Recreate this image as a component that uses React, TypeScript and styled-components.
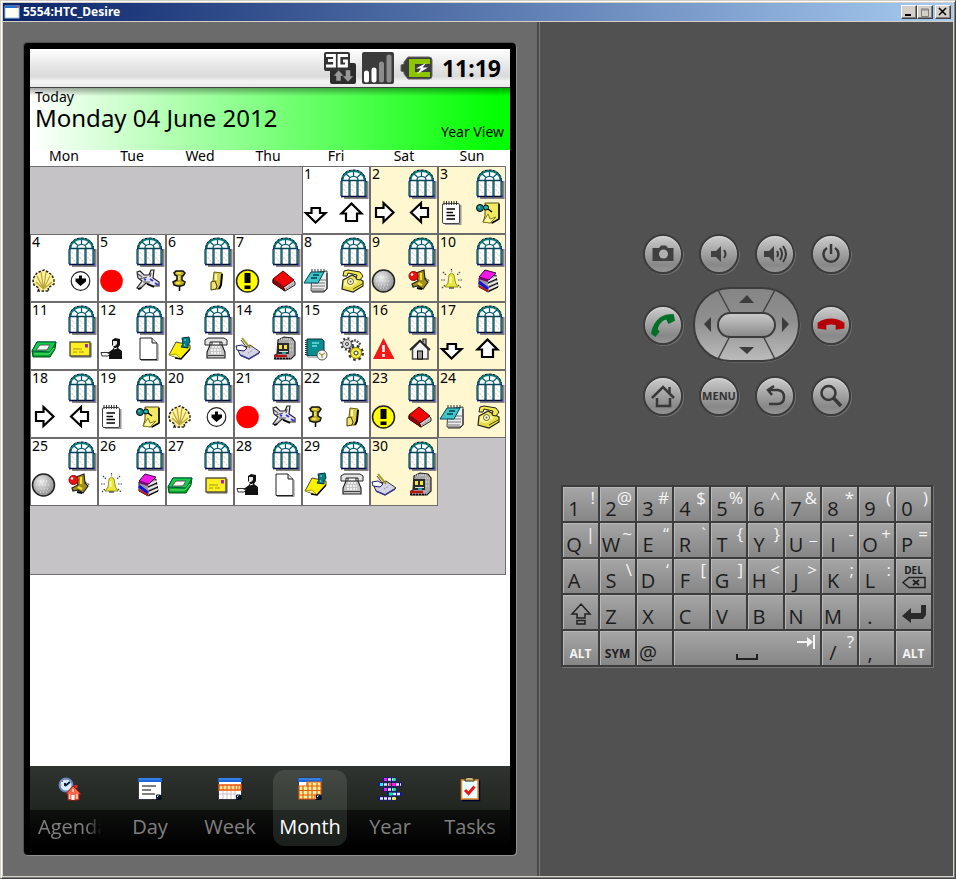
import React from "react";
import styled, { createGlobalStyle, css } from "styled-components";

const GlobalStyle = createGlobalStyle`
  *, *::before, *::after { box-sizing: border-box; }
  body { margin: 0; background: #d4d0c8; font-family: "Open Sans", "Noto Sans", sans-serif; color: #000; }
  button { font: inherit; color: inherit; padding: 0; border: 0; background: none; }
`;

/* ---------- emulator window ---------- */

const EmulatorWindow = styled.div`
  display: flex;
  flex-direction: column;
  min-height: 100vh;
  padding: 1px;
  background: #d4d0c8;
  border: 1px solid;
  border-color: #d4d0c8 #404040 #404040 #d4d0c8;
  box-shadow: inset 1px 1px 0 #fff, inset -1px -1px 0 #808080;
`;

const TitleBar = styled.header`
  display: flex;
  align-items: center;
  height: 18px;
  margin: 1px;
  padding: 0 2px 0 1px;
  gap: 2px;
  background: linear-gradient(90deg, #0a246a, #a6caf0);
`;

const Title = styled.h1`
  flex: 1;
  margin: 0;
  padding-left: 1px;
  font: bold 12px/18px "Noto Sans", sans-serif;
  color: #fff;
`;

const Caption = styled.button<{ $spaced?: boolean }>`
  display: grid;
  place-items: center;
  width: 16px;
  height: 14px;
  margin-left: ${(p) => (p.$spaced ? "0" : "-2px")};
  background: #d4d0c8;
  border: 1px solid;
  border-color: #fff #404040 #404040 #fff;
  box-shadow: inset -1px -1px 0 #808080;
`;

const Body = styled.div`
  display: grid;
  grid-template-columns: minmax(0, 534fr) 3px minmax(0, 413fr);
  flex: 1;
  margin: 0 1px 1px;
`;

const ScreenPane = styled.section`
  display: flex;
  padding: 21px;
  background: #6b6b6b;
`;

const Divider = styled.div`
  background: #4a4a4a;
  border-right: 1px solid #777;
`;

const ControlPane = styled.section`
  display: flex;
  flex-direction: column;
  align-items: center;
  gap: 54px;
  padding: 196px 20px 20px 21px;
  background: #515151;
`;

/* ---------- phone ---------- */

const Phone = styled.div`
  display: flex;
  flex: 1;
  min-width: 0;
  padding: 6px 6px 5px;
  background: #000;
  border-radius: 4px;
  box-shadow: 1px 1px 0 #909090, -1px -1px 0 #505050;
`;

const Screen = styled.div`
  display: flex;
  flex: 1;
  flex-direction: column;
  min-width: 0;
  background: #fff;
`;

const StatusBar = styled.div`
  display: flex;
  align-items: center;
  justify-content: flex-end;
  gap: 6px;
  height: 39px;
  padding-right: 9px;
  border-bottom: 1px solid #444;
  background: linear-gradient(#fff, #e6e6e6 45%, #dadada 72%, #f4f4f4 86%, #e8e8e8);
`;

const Clock = styled.time`
  margin-left: 4px;
  font: bold 23px/38px "Noto Sans", sans-serif;
`;

const DayHeader = styled.div`
  display: grid;
  grid-template-columns: 1fr auto;
  align-content: start;
  height: 62px;
  padding: 0 6px 0 5px;
  background: linear-gradient(rgba(0, 0, 0, 0.35), rgba(0, 0, 0, 0) 8px), linear-gradient(90deg, #fff, #0f0 98%);
`;

const Today = styled.div`
  grid-column: 1 / -1;
  font: 14px/18px "Noto Sans", sans-serif;
`;

const DateText = styled.h2`
  margin: 0;
  font: 24px/24px "Noto Sans", sans-serif;
  white-space: nowrap;
`;

const ViewName = styled.div`
  align-self: end;
  height: 7px;
  font: 14px/18px "Noto Sans", sans-serif;
`;

/* ---------- calendar ---------- */

const Calendar = styled.table`
  width: calc(100% - 4px);
  table-layout: fixed;
  border-collapse: separate;
  border-spacing: 0;
`;

const Weekday = styled.th`
  height: 16px;
  padding: 0 0 4px;
  font: 14px/12px "Noto Sans", sans-serif;
`;

const DayCell = styled.td<{ $weekend: boolean }>`
  height: 68px;
  padding: 0 0 0 1px;
  vertical-align: top;
  border: 1px solid #6c6c6c;
  background: ${(p) => (p.$weekend ? "#fff7cf" : "#fff")};
`;

const Blank = styled.td<{ $edge: "top" | "none" | "bottom" }>`
  height: 68px;
  padding: 0;
  background: #c6c3c6;
  border-right: 1px solid #707070;
  ${(p) => p.$edge === "top" && css`border-top: 1px solid #707070; border-right: 0;`}
  ${(p) => p.$edge === "bottom" && css`height: 69px; border-bottom: 1px solid #707070;`}
`;

const DayGrid = styled.div`
  display: grid;
  grid-template-columns: 24px 28px;
  grid-template-rows: 32px 24px;
  column-gap: 12px;
  padding-top: 2px;
`;

const DayNumber = styled.span`
  font: 14px/10px "Noto Sans", sans-serif;
`;

const Glyph = styled.svg`
  display: block;
  overflow: visible;
`;

const BlankArea = styled.div`
  flex: 1;
`;

/* ---------- tabs ---------- */

const TabBar = styled.nav`
  display: grid;
  grid-template-columns: repeat(6, minmax(0, 1fr));
  height: 84px;
  padding: 4px 0;
  background: linear-gradient(#303430, #202520 44px, #0e100e 44px, #000 80px);
`;

const Tab = styled.button<{ $active?: boolean }>`
  display: grid;
  grid-template-rows: 38px 38px;
  place-items: center;
  margin: 0 3px;
  border-radius: 12px;
  background: ${(p) => (p.$active ? "linear-gradient(#444944, #363c36 40px, #242824 40px, #1c201c)" : "none")};
  color: ${(p) => (p.$active ? "#fff" : "#808080")};
`;

const TabLabel = styled.span<{ $fade?: boolean }>`
  width: 100%;
  max-width: 64px;
  overflow: hidden;
  white-space: nowrap;
  text-align: ${(p) => (p.$fade ? "left" : "center")};
  font: 20px/30px "Open Sans", sans-serif;
  ${(p) => p.$fade && css`mask-image: linear-gradient(90deg, #000 75%, transparent);`}
`;

/* ---------- hardware buttons ---------- */

const ButtonPad = styled.div`
  display: grid;
  grid-template-columns: repeat(4, 56px);
  grid-template-rows: repeat(3, 71px);
  place-items: center;
`;

const RoundButton = styled.button`
  display: grid;
  place-items: center;
  width: 40px;
  height: 40px;
  border: 2px solid #3c3c3c;
  border-radius: 50%;
  background: linear-gradient(#cdcdcd, #a4a4a4 45%, #888 80%, #969696);
  box-shadow: 1px 1px 0 #707070, inset 0 1px 1px #ddd;
  color: #333;
  font: bold 11px/12px "Open Sans", sans-serif;
`;

const DPad = styled.div`
  grid-column: span 2;
`;

const Keyboard = styled.div`
  display: grid;
  align-self: stretch;
  grid-template-columns: repeat(10, minmax(0, 1fr));
  grid-auto-rows: 34px;
  gap: 2px;
  padding: 2px;
  background: #3c3c3c;
  box-shadow: 1px 1px 0 #777;
`;

const Key = styled.button<{ $wide?: boolean }>`
  display: grid;
  grid-template-columns: minmax(0, 1fr);
  grid-template-rows: minmax(0, 1fr);
  grid-column: span ${(p) => (p.$wide ? 4 : 1)};
  background: linear-gradient(#a6a6a6, #868686);
  box-shadow: inset 1px 1px 0 #b8b8b8;
  color: #1c1c1c;
  & > * { grid-area: 1 / 1; }
`;

const KeyMain = styled.span`
  align-self: end;
  display: flex;
  justify-content: center;
  width: 22px;
  font: 20px/24px "Open Sans", sans-serif;
`;

const KeyAlt = styled.span`
  place-self: start end;
  padding-right: 3px;
  color: #f4f4f4;
  font: 17px/22px "Open Sans", sans-serif;
`;

const KeyWord = styled.span<{ $light?: boolean }>`
  place-self: end center;
  padding-bottom: 3px;
  color: ${(p) => (p.$light ? "#f4f4f4" : "#222")};
  font: bold 12px/16px "Open Sans", sans-serif;
`;

const KeyStack = styled.span`
  display: flex;
  flex-direction: column;
  place-self: center;
  align-items: center;
  font: bold 10px/12px "Open Sans", sans-serif;
`;

const KeyDrawing = styled.span<{ $at?: "bottom" | "corner" }>`
  place-self: ${(p) => (p.$at === "bottom" ? "end center" : p.$at === "corner" ? "start end" : "center")};
  padding: ${(p) => (p.$at === "bottom" ? "0 0 5px" : p.$at === "corner" ? "0 4px 0 0" : "3px 0 0")};
`;

/* ---------- calendar drawings (24 x 24) ---------- */

const k = "#000";
const icons: Record<string, React.ReactNode> = {
  down: <path d="M7.500 7H16V12H21.500L11.500 21.500L2 12H7.500Z" fill="#fff" stroke={k} strokeWidth="2.200" />,
  up: <path d="M11.500 2.500L21.500 12.500H17V20H6V12.500H1.500Z" fill="#fff" stroke={k} strokeWidth="2.200" />,
  right: <path d="M4 7H11.500V2L21.500 11.500L11.500 21V16H4Z" fill="#fff" stroke={k} strokeWidth="2.200" />,
  left: <path d="M20 7H13V2L3 11.500L13 21V16H20Z" fill="#fff" stroke={k} strokeWidth="2.200" />,
  notepad: (
    <>
      <path d="M5 23H20.500V4" fill="none" stroke="#999" strokeWidth="2" />
      <rect x="2.500" y="2.500" width="17" height="20" rx="1.500" fill="#fff" stroke="#444" />
      <path d="M4 0V4M6.500 0V4M9 0V4M11.500 0V4M14 0V4M16.500 0V4" stroke="#333" />
      <path d="M6.500 8H15M6.500 11.500H13M6.500 14.500H15M6.500 18H15" stroke={k} strokeWidth="1.500" />
    </>
  ),
  notePin: (
    <>
      <path d="M9 2L23 2V18L16 22L7 21L9 15Z" fill="#f3ea62" stroke="#554f10" />
      <path d="M23 3V18L16 22" fill="none" stroke={k} strokeWidth="1.500" />
      <path d="M7 21L12 13L14 18L20 16L14 22Z" fill="#fffaa0" stroke="#887f20" />
      <circle cx="4" cy="7" r="3.500" fill="#108a8a" stroke={k} />
      <circle cx="10" cy="6.500" r="2.500" fill="#20b0b0" stroke={k} />
      <path d="M12 8L16 11" stroke={k} strokeWidth="1.500" />
      <path d="M2.500 6H4" stroke="#aee" />
    </>
  ),
  shell: (
    <>
      <path d="M6 22L7 19L2 16L1 12L2 8L5 4L9 2L12 1L16 3L20 6L22 11L22 15L16 19L17 22Z" fill="#fff29a" />
      <path d="M11.500 20L4 13M11.500 20L5 7M11.500 20L9 3M11.500 20L14 3M11.500 20L18 7M11.500 20L20 13" stroke="#b8a63c" strokeWidth="1.200" />
      <path d="M6 22L7 19L2 16L1 12L2 8L5 4L9 2L12 1L16 3L20 6L22 11L22 15L16 19L17 22Z" fill="none" stroke="#222" strokeWidth="1.500" strokeDasharray="2.500 1.500" />
    </>
  ),
  circled: (
    <>
      <circle cx="12.500" cy="12" r="9.300" fill="#fff" stroke="#222" strokeWidth="1.200" />
      <path d="M11 6.500H14V9.500H18V12.500L12.500 17L7.500 12.500V9.500H11Z" fill={k} />
    </>
  ),
  red: <circle cx="11.500" cy="12" r="11.300" fill="#f00" />,
  plane: (
    <>
      <path d="M1 3L4 2L8 6L13 6L15 1H18L17 9L23 13V17L17 17L10 14L4 20L1 19L6 12L2 9Z" fill="#e6e6ea" stroke="#222" strokeWidth="1.200" />
      <path d="M3 10L11 8M7 13L14 13M2 5L6 8M15 4L14 8" stroke="#555" strokeWidth="1.200" />
      <path d="M3 19L8 15" stroke="#aaa" strokeWidth="1.500" />
      <path d="M14 10L17 12M19 14L22 16M8 10L10 11" stroke="#3434f2" strokeWidth="2" />
      <path d="M2 20L5 19M11 15L18 18" stroke={k} strokeWidth="1.500" />
    </>
  ),
  pin: (
    <>
      <path d="M11.500 16V22" stroke={k} strokeWidth="1.500" />
      <path d="M8 2H15L17 4L15 7L14 7V11L17 13L16 16L13 17H9L6 16L5 13L9 11V7L7 6L6 4Z" fill="#bfae20" stroke="#111" strokeWidth="1.500" />
      <path d="M8.500 4H13M11 7V11M8 14H12" stroke="#ffee62" strokeWidth="1.500" />
    </>
  ),
  scroll: (
    <>
      <path d="M10 3L18 4L17 16L15 20L11 20L12 15L9 12Z" fill="#d8cc4c" stroke="#6a5f08" />
      <path d="M18 5L17 16L15 20" fill="none" stroke={k} strokeWidth="2" />
      <path d="M7 13L11 12L13 17L12 20L7 21Z" fill="#efe570" stroke="#443c00" />
      <path d="M12 5V11" stroke="#fff9b8" strokeWidth="2" />
    </>
  ),
  alert: (
    <>
      <circle cx="11.500" cy="12" r="11" fill="#ff0" stroke="#222" strokeWidth="1.500" />
      <path d="M8.500 4H14.500V14H8.500ZM8.500 16.500H14.500V20H8.500Z" fill={k} />
    </>
  ),
  book: (
    <>
      <path d="M1 10L12 3L23 13V16L13 22L1 14Z" fill="#ccc" stroke="#222" />
      <path d="M1 10L11 2L22 11L12 18Z" fill="#f00808" stroke="#600" />
      <path d="M1 11L12 19L13 22L1 14Z" fill="#b00000" stroke="#400" />
      <path d="M14 20L22 14" stroke="#666" strokeDasharray="1 1" />
    </>
  ),
  tealPad: (
    <>
      <path d="M8 4L23 2V20L20 22H7Z" fill="#eee" stroke="#444" />
      <path d="M9 14H21M8 17H21M8 20H20M15 11H22" stroke="#777" />
      <path d="M23 4V20L20 23H8" stroke="#222" fill="none" />
      <path d="M7 3L20 3L14 14L0 14Z" fill="#40c4c8" stroke="#045" />
      <path d="M9 6H15M7 9H13" stroke="#045" strokeWidth="1.500" />
      <path d="M8 3V0M11 3V0M14 3V0M17 3V0M20 3V0" stroke="#333" />
    </>
  ),
  yellowPhone: (
    <>
      <path d="M3 11L12 6L23 12V17L13 23L2 20Z" fill="#e6dc48" stroke="#222" strokeWidth="1.200" />
      <path d="M4 2L8 1L20 3L23 7L20 11L16 10L17 6L8 4L7 7L3 7Z" fill="#f6ea4a" stroke="#222" />
      <path d="M4 12L12 8L18 13L11 18L4 17Z" fill="#fff69a" />
      <circle cx="10.500" cy="12.500" r="3" fill="#fff" stroke="#665c00" />
      <circle cx="10.500" cy="12.500" r="1" fill="#665c00" />
      <path d="M13 20L22 15" stroke="#554c00" />
    </>
  ),
  ball: (
    <>
      <circle cx="11.500" cy="12" r="11" fill="url(#ballShade)" stroke="#222" strokeWidth="1.500" />
      <path d="M5 8H16M4 12H19M6 16H18M8 19H15" stroke="#fff" strokeDasharray="1 2" opacity=".7" />
    </>
  ),
  joystick: (
    <>
      <path d="M8 4L16 1L17 10L20 13L15 20L10 17L5 18L4 15L10 12Z" fill="#a09018" stroke="#222" strokeWidth="1.200" />
      <path d="M13 4V11M10 14L14 16" stroke="#f6e23a" strokeWidth="2" />
      <path d="M17 9L22 12" stroke="#222" strokeDasharray="2 1" />
      <path d="M9 19L14 20" stroke={k} strokeWidth="2" />
      <circle cx="5.500" cy="7" r="4.500" fill="#ee1212" stroke="#900" />
      <circle cx="4" cy="5.500" r="1.300" fill="#fff" />
    </>
  ),
  bell: (
    <>
      <path d="M11.500 4L14 6L15.500 14L18 18H5L8 14L9 6Z" fill="#e8e838" stroke="#99941f" />
      <path d="M10.500 8V14" stroke="#fffbb0" strokeWidth="2" />
      <path d="M9 19H14" stroke="#555" strokeWidth="1.500" />
      <path d="M3 3L6 6M20 3L17 6M1 11H5M18 11H22M2 19L5 16M18 16L21 19M11.500 0V3" stroke="#444" strokeWidth="1.200" strokeDasharray="1.500 1" />
    </>
  ),
  books: (
    <>
      <path d="M3 9L20 6L22 18L12 23L3 18Z" fill="#999" stroke="#222" />
      <path d="M3 13L12 20" stroke="#1212d8" strokeWidth="3" />
      <path d="M3 17L12 22" stroke="#c01818" strokeWidth="2" />
      <path d="M12 12L21 8M12 16L22 12M13 20L22 16" stroke="#eee" strokeWidth="1.500" />
      <path d="M12 14L21 10M13 18L22 14M13 22L22 18" stroke={k} />
      <path d="M3 8L9 1L20 4L13 11Z" fill="#f218e8" stroke="#404" />
      <path d="M3 9L12 12" stroke="#80007c" strokeWidth="2" />
    </>
  ),
  tray: (
    <>
      <path d="M0 14L5 5H24L23 12L18 20H1Z" fill="#00a52c" stroke="#044c14" />
      <path d="M0 14L5 5H24L18 15Z" fill="#10d048" stroke="#054" />
      <path d="M4 13L8 8H18L15 13Z" fill="#fff" stroke="#555" />
      <path d="M2 17H17L22 11" stroke="#61ef7c" fill="none" />
    </>
  ),
  mail: (
    <>
      <path d="M3 20H23V6" stroke="#555" fill="none" />
      <rect x="2" y="5" width="20" height="14" fill="#ffef20" stroke="#333" strokeWidth="1.200" />
      <rect x="17" y="7" width="3" height="3.500" fill="#b323a6" />
      <path d="M5 12H14M5 15H9M11 15H16" stroke="#a59410" />
    </>
  ),
  person: (
    <>
      <path d="M12 3L15 1L20 2V8L18 11L22 14V22H9V18H2V16L9 15L13 12L14 10L12 8Z" fill="#111" />
      <path d="M13 4H17L17 7L15 9H13Z" fill="#e6e6e6" />
      <path d="M1 15.500H7L10 17L8 19H2Z" fill="#fff" stroke="#333" />
      <path d="M14 12L17 11" stroke="#fff" />
    </>
  ),
  page: (
    <>
      <path d="M4 22.500V1H16L21 6V22.500Z" fill="#fff" stroke="#222" />
      <path d="M16 1V6H21" fill="#ddd" stroke="#222" />
      <path d="M22 7V23.500H5" fill="none" stroke="#888" />
    </>
  ),
  yellowNote: (
    <>
      <path d="M1 18L8 5L22 8L22 12L13 22L7 20Z" fill="#fff000" stroke="#444" />
      <path d="M22 12L13 22L7 21" fill="none" stroke={k} strokeWidth="1.500" />
      <path d="M1 18L8 17L12 21" fill="#fffa9a" stroke="#a59e00" />
      <path d="M14 1L21 0L22 5L20 8L20 11L13 10L15 7Z" fill="#087f82" stroke="#034" />
      <path d="M16 3H18M16 7L17 9" stroke="#7dd" />
    </>
  ),
  greyPhone: (
    <>
      <path d="M1 3L4 1H20L23 3V8H18V5H6V8H1Z" fill="#e4e4e4" stroke="#222" />
      <path d="M6 8H18L21 15V21H3V15Z" fill="#c4c4c4" stroke="#222" strokeWidth="1.200" />
      <path d="M8 5V8M16 5V8" stroke="#222" />
      <path d="M8 10H16M7 13H17M7 16H17" stroke="#fff" strokeDasharray="2 1" strokeWidth="1.500" />
      <path d="M4 18.500H20" stroke="#444" />
    </>
  ),
  writing: (
    <>
      <path d="M2 13L14 8L24 15L13 22L4 18Z" fill="#d4d4e6" stroke="#333" />
      <path d="M4 18L13 22L23 16" fill="none" stroke="#3a3a90" strokeWidth="1.500" />
      <path d="M0 9L6 8L11 11L8 14L1 13Z" fill="#fff" stroke="#1b1b75" />
      <path d="M6 1L14 11" stroke="#a39520" strokeWidth="2" />
      <path d="M5 3L11 11" stroke="#333" />
      <path d="M12 16L17 13" stroke="#888" strokeDasharray="1 1" />
    </>
  ),
  train: (
    <>
      <path d="M6 3L12 0L20 1L23 5V18L19 22H3V18L5 17Z" fill="#a8a8a8" stroke="#222" strokeWidth="1.200" />
      <path d="M7 2H19M17 5H22M18 9H22M18 13H22" stroke="#eee" strokeDasharray="1 1" />
      <path d="M5 6H17V17H5Z" fill="#2a2a2a" />
      <path d="M7 8H10V12H7ZM12 8H15V12H12Z" fill="#f6e432" />
      <path d="M7 14.500H16" stroke="#ddd" />
      <path d="M10 16H14" stroke="#2cc" strokeWidth="1.500" />
      <path d="M2 19H15" stroke="#b81212" strokeWidth="2.500" />
      <path d="M2 21.500H18" stroke={k} strokeDasharray="2 1" strokeWidth="1.500" />
    </>
  ),
  notebook: (
    <>
      <path d="M3 2H18L20 4V19H3Z" fill="#0b8c91" stroke="#033" />
      <path d="M2 3V19" stroke="#333" strokeWidth="2" strokeDasharray="1 1" />
      <path d="M8 6H15M8 9H13" stroke="#75e0e0" strokeWidth="1.500" />
      <path d="M4 20H13" stroke="#bbb" strokeWidth="2" />
      <circle cx="18" cy="18" r="5" fill="#f4f4f4" stroke="#555" />
      <path d="M15 16L18 18L21 16M18 18V21" stroke="#8a8100" fill="none" />
    </>
  ),
  gears: (
    <>
      <circle cx="7" cy="7" r="5.500" fill="none" stroke="#333" strokeWidth="2.500" strokeDasharray="1.800 2.500" />
      <circle cx="7" cy="7" r="4.500" fill="#ddd" stroke="#555" />
      <circle cx="7" cy="7" r="1.500" fill="#fff" stroke="#333" />
      <circle cx="16" cy="16" r="6.500" fill="none" stroke="#333" strokeWidth="3" strokeDasharray="2.500 2.600" />
      <circle cx="16" cy="16" r="5.500" fill="#f4ea3c" stroke="#8a8100" />
      <circle cx="16" cy="16" r="2" fill="#fff" stroke="#333" />
      <path d="M14 3L18 5L21 8" stroke="#555" strokeWidth="2.500" strokeDasharray="2 1" fill="none" />
    </>
  ),
  warn: (
    <>
      <path d="M11.500 1L22.500 22H1Z" fill="#f01818" />
      <path d="M11.500 8V15M11.500 17V20" stroke="#fff" strokeWidth="2.500" />
    </>
  ),
  house: (
    <>
      <path d="M15 5V2H18V9" fill="#bbb" stroke="#222" strokeWidth="1.200" />
      <path d="M4.500 12V22H20V12L12 4Z" fill="#f2f2f2" stroke="#444" strokeWidth="1.500" />
      <path d="M2 13L12 3.500L22 13" fill="none" stroke="#222" strokeWidth="1.800" />
      <rect x="9.500" y="14" width="5" height="8" fill="#999" stroke={k} />
    </>
  ),
};

const sequence = [
  "down", "up", "right", "left", "notepad", "notePin", "shell", "circled",
  "red", "plane", "pin", "scroll", "alert", "book", "tealPad", "yellowPhone",
  "ball", "joystick", "bell", "books", "tray", "mail", "person", "page",
  "yellowNote", "greyPhone", "writing", "train", "notebook", "gears", "warn", "house",
];

const DayIcon = ({ index }: { index: number }) => (
  <Glyph width="24" height="24" viewBox="0 0 24 24" aria-hidden="true">
    {icons[sequence[index % sequence.length]]}
  </Glyph>
);

const ArchedWindow = () => (
  <Glyph width="28" height="30" viewBox="0 0 28 30" aria-hidden="true">
    <path d="M4 29H27.500V13H26" fill="none" stroke="#8a8488" strokeWidth="2" />
    <path d="M1 28V11.500H2C2 5 7 1.500 13.500 1.500S25 5 25 11.500H26V28Z" fill="#fff" />
    <path d="M2.500 11C3 5 8 2 13.500 2S24 5 24.500 11" fill="none" stroke="#007c7c" strokeWidth="2" />
    <path d="M1.500 10.500C2.500 4 7 1 13.500 1S24.500 4 25.500 10.500" fill="none" stroke="#012" strokeDasharray="3 1" />
    <path d="M1.500 12V27M9.500 12V27M17.500 12V27M25.500 12V27" fill="none" stroke="#012" strokeWidth="2" />
    <path d="M1.500 12V27M9.500 12V27M17.500 12V27M25.500 12V27" fill="none" stroke="#007c7c" />
    <path d="M1 11.500H26" stroke="#045" strokeWidth="1.500" />
    <path d="M9 11C9 8.500 11 7.500 13.500 7.500S18 8.500 18 11M9.500 8L6 5M17.500 8L21 5M13.500 7V3" fill="none" stroke="#056" strokeWidth="1.200" />
    <path d="M3.500 15L7.500 19M3.500 20L7.500 25M11.500 15L15.500 19M11.500 20L15.500 25M19.500 15L23.500 19M19.500 20L23.500 25" stroke="#999" strokeWidth=".8" strokeDasharray="1 1" />
    <path d="M1 27.500H26.500" stroke="#012" strokeWidth="1.500" />
    <path d="M1 27.500H2.500M9 27.500H10M17 27.500H18M25 27.500H26.500M1 11.500H2M25 11.500H26" stroke="#11f" strokeWidth="1.500" />
  </Glyph>
);

const Day = ({ day, weekend }: { day: number; weekend: boolean }) => (
  <DayCell $weekend={weekend}>
    <DayGrid>
      <DayNumber>{day}</DayNumber>
      <ArchedWindow />
      <DayIcon index={(day - 1) * 2} />
      <DayIcon index={(day - 1) * 2 + 1} />
    </DayGrid>
  </DayCell>
);

const weeks = [
  [1, 2, 3],
  [4, 5, 6, 7, 8, 9, 10],
  [11, 12, 13, 14, 15, 16, 17],
  [18, 19, 20, 21, 22, 23, 24],
  [25, 26, 27, 28, 29, 30],
];

/* ---------- tab drawings ---------- */

const Sheet = ({ children }: { children: React.ReactNode }) => (
  <>
    <path d="M0.500 1H23.500V18L19 22.500H0.500Z" fill="#fff" stroke="#334" />
    <path d="M0 1H24V5H0Z" fill="#1c66d8" />
    <path d="M1 2H22" stroke="#4b9af5" />
    {children}
    <path d="M23.500 17V23H17.500Z" fill="#012" />
    <path d="M18.500 18H22L18.500 21.500Z" fill="#bfe6f6" stroke="#012" />
  </>
);

const tabs: { label: string; art: React.ReactNode; active?: boolean; fade?: boolean }[] = [
  {
    label: "Agenda",
    fade: true,
    art: (
      <>
        <circle cx="8" cy="8" r="6.500" fill="#d8edfa" stroke="#6a86bc" strokeWidth="2" />
        <path d="M7 9L12 5M7 6V9" stroke="#102040" strokeWidth="2" />
        <path d="M8 2V3M2.500 8H3.500M4 4L5 5" stroke="#e44" />
        <path d="M18 8V11" stroke="#e22" strokeWidth="3" />
        <path d="M15 9L23 17H21V23H10V17H8Z" fill="#f7694c" stroke="#a81a10" />
        <path d="M13.500 18H16.500V23H13.500Z" fill="#fff" />
        <path d="M11.500 17V22M19 17V22M15 12V15" stroke="#ffd0b4" strokeWidth="1.500" />
      </>
    ),
  },
  { label: "Day", art: <Sheet><path d="M4 9H18M4 13H13M4 17H17" stroke="#555" strokeWidth="1.500" /></Sheet> },
  {
    label: "Week",
    art: (
      <Sheet>
        <path d="M1 17H18M5 14V22M9 14V22M13 14V22M17 14V22" stroke="#c8c0c8" />
        <rect x="1" y="8" width="22" height="5" fill="#ffe69a" stroke="#e8520e" strokeWidth="1.500" />
        <path d="M5 8V13M9 8V13M13 8V13M17 8V13M20 8V13" stroke="#e8520e" />
      </Sheet>
    ),
  },
  {
    label: "Month",
    active: true,
    art: (
      <Sheet>
        <path d="M9 5H23V18H17V22H1V9H9Z" fill="#fff0a0" stroke="#e45c08" strokeWidth="1.200" />
        <path d="M1 13.500H23M1 18H18M9 9H23M5 9V22M10 6V22M14 6V22M19 6V18" stroke="#e45c08" strokeWidth="1.200" />
      </Sheet>
    ),
  },
  {
    label: "Year",
    art: (
      <>
        <path d="M5 2.500H19M0 7.500H24M5 12.500H19M9 17H24M0 21.500H19" stroke="#14148c" strokeWidth="4" />
        <path d="M6 2.500H18M2 7.500H23M6 12.500H18M11 17H23M2 21.500H18" stroke="#eef" strokeWidth="2.500" strokeDasharray="3 1" />
        <path d="M6 2.500H9M14 7.500H18M6 12.500H9" stroke="#f0f" strokeWidth="2.500" />
        <path d="M15 2.500H18M11 17H15M15 12.500H18" stroke="#0e8" strokeWidth="2.500" />
        <path d="M2 7.500H5" stroke="#0ff" strokeWidth="2.500" />
        <path d="M11 7.500H13" stroke="#f22" strokeWidth="2.500" />
        <path d="M15 21.500H18" stroke="#ff0" strokeWidth="2.500" />
      </>
    ),
  },
  {
    label: "Tasks",
    art: (
      <>
        <path d="M4 23.500H21.500V3" fill="none" stroke="#003" strokeWidth="1.500" />
        <rect x="3.500" y="3" width="16.500" height="19" fill="#e8ffff" stroke="#dd8a30" strokeWidth="1.500" />
        <path d="M7 2L9 0.500H14L16 2V4H7Z" fill="#c9b27c" stroke="#321" />
        <path d="M7 13L10.500 16.500L16.500 9.500" fill="none" stroke="#e81616" strokeWidth="3" />
      </>
    ),
  },
];

/* ---------- status drawings ---------- */

const NetworkIcon = () => (
  <Glyph width="32" height="32" viewBox="0 0 32 32" aria-label="3G" role="img">
    <rect x="6" y="11" width="26" height="21" rx="2" fill="#2c2c2c" />
    <rect x="0" y="0" width="26" height="19" rx="2" fill="#333" />
    <path d="M2 3.500H10.500V14H2M4 8.500H10M24 3.500H15V14H22.500V9H19" fill="none" stroke="#fff" strokeWidth="2.800" />
    <path d="M14.500 18L20 24H17V29H12V24H9.500ZM24 30L18.500 24H21.500V18H26.500V24H29.500Z" fill="#999" stroke="#333" strokeWidth=".5" />
  </Glyph>
);

const SignalIcon = () => (
  <Glyph width="32" height="32" viewBox="0 0 32 32" aria-label="Signal" role="img">
    <rect width="32" height="32" rx="2" fill="#3b3b3b" />
    <path d="M4.500 21V28M12 18V28" stroke="#fff" strokeWidth="5" strokeLinecap="round" />
    <path d="M19.500 12V28M27 5V28" stroke="#8d8d8d" strokeWidth="5" strokeLinecap="round" />
  </Glyph>
);

const BatteryIcon = () => (
  <Glyph width="32" height="32" viewBox="0 0 32 32" aria-label="Charging" role="img">
    <path d="M4 12V10L8 5H29Q32 5 32 8V24Q32 27 29 27H8L4 22V20L1 19V13Z" fill="#3c3c3c" stroke="#666" />
    <path d="M9 7H30V12H15V20H30V25H9Z" fill="#8cc400" />
    <path d="M26 11L16 16.500H21L17 22L28 15.500H22.500Z" fill="#fff" />
  </Glyph>
);

/* ---------- control drawings ---------- */

const Art = ({ children, size = 24 }: { children: React.ReactNode; size?: number }) => (
  <Glyph width={size} height={size} viewBox="0 0 24 24" fill="none" stroke="#383838" strokeWidth="2" aria-hidden="true">
    {children}
  </Glyph>
);

const controls: Record<string, React.ReactNode> = {
  Camera: (
    <Art>
      <path d="M1.500 6H8L10 3.500H15L17 6H22.500V19H1.500Z" fill="#404040" stroke="none" />
      <circle cx="12.500" cy="12" r="4.500" fill="#b0b0b0" stroke="none" />
    </Art>
  ),
  "Volume down": (
    <Art>
      <path d="M4 9H9L14 4V20L9 15H4Z" fill="#404040" stroke="none" />
      <path d="M17 8Q20 12 17 16" />
    </Art>
  ),
  "Volume up": (
    <Art>
      <path d="M1 9H6L11 4V20L6 15H1Z" fill="#404040" stroke="none" />
      <path d="M14 9Q16 12 14 15M17 6Q21 12 17 18M20 4Q26 12 20 20" />
    </Art>
  ),
  Power: <Art><path d="M8 6A7.500 7.500 0 1 0 16 6M12 2V12" strokeWidth="2.500" /></Art>,
  Call: (
    <Art size={26}>
      <path d="M1 20C2 11 9 2 18 2L22 2L23 8L17 11L15 7C11 8 8 12 7 16L9 18L5 23Z" fill="#006f28" stroke="none" />
    </Art>
  ),
  "End call": (
    <Art size={28}>
      <path d="M0.500 10Q12 3 23.500 10V15L16 16V12Q12 11 8 12V16L0.500 15Z" fill="#b50008" stroke="none" />
    </Art>
  ),
  Home: (
    <Art>
      <path d="M1 14L12 3L23 14" strokeWidth="2.500" />
      <path d="M6 14V22H19V14M18.500 9V3" strokeWidth="2.500" />
    </Art>
  ),
  Back: <Art><path d="M11 2L5 6L9 11M5 6H15Q21 7 21 13Q21 20 14 20H6" strokeWidth="2.500" /></Art>,
  Search: <Art><circle cx="9.500" cy="9" r="7" strokeWidth="2.500" /><path d="M14.500 14L22 22" strokeWidth="3.500" /></Art>,
};

const Round = ({ name }: { name: string }) => (
  <RoundButton aria-label={name}>{controls[name]}</RoundButton>
);

const DirectionPad = () => (
  <DPad>
    <Glyph width="108" height="76" viewBox="0 0 108 76" role="img" aria-label="Direction pad">
      <rect x="2" y="2" width="105" height="73" rx="36" fill="none" stroke="#747474" />
      <rect x="1" y="1" width="105" height="73" rx="36" fill="url(#padShade)" stroke="#3c3c3c" strokeWidth="2" />
      <path d="M25 3L38 27M82 3L69 27M25 72L37 49M82 72L70 49" stroke="#444" strokeWidth="1.500" />
      <rect x="25" y="26" width="57" height="24" rx="12" fill="url(#centreShade)" stroke="#3c3c3c" strokeWidth="2" />
      <path d="M54 8L61 16H46ZM54 67L61 60H46ZM11 37L18 30V45ZM96 37L89 30V45Z" fill="#3c3c3c" />
    </Glyph>
  </DPad>
);

/* ---------- keyboard ---------- */

const keyRows: [string, string][][] = [
  [["1", "!"], ["2", "@"], ["3", "#"], ["4", "$"], ["5", "%"], ["6", "^"], ["7", "&"], ["8", "*"], ["9", "("], ["0", ")"]],
  [["Q", "|"], ["W", "~"], ["E", "“"], ["R", "`"], ["T", "{"], ["Y", "}"], ["U", "_"], ["I", "-"], ["O", "+"], ["P", "="]],
  [["A", ""], ["S", "\\"], ["D", "‘"], ["F", "["], ["G", "]"], ["H", "<"], ["J", ">"], ["K", ";"], ["L", ":"]],
];

const CharKey = ({ main, alt = "" }: { main: string; alt?: string }) => (
  <Key>
    <KeyMain>{main}</KeyMain>
    {alt && <KeyAlt>{alt}</KeyAlt>}
  </Key>
);

const HiddenDefs = styled.svg`
  display: block;
  width: 0;
  height: 0;
`;

const Shades = () => (
  <HiddenDefs aria-hidden="true">
    <defs>
      <radialGradient id="ballShade" cx=".4" cy=".35" r=".7">
        <stop offset="0" stopColor="#eee" />
        <stop offset="1" stopColor="#888" />
      </radialGradient>
      <linearGradient id="padShade" x2="0" y2="1">
        <stop offset="0" stopColor="#858585" />
        <stop offset=".45" stopColor="#8f8f8f" />
        <stop offset="1" stopColor="#bcbcbc" />
      </linearGradient>
      <linearGradient id="centreShade" x2="0" y2="1">
        <stop offset="0" stopColor="#ccc" />
        <stop offset="1" stopColor="#888" />
      </linearGradient>
    </defs>
  </HiddenDefs>
);

export default function App() {
  return (
    <>
      <GlobalStyle />
      <EmulatorWindow>
        <TitleBar>
          <Glyph width="16" height="14" viewBox="0 0 16 14" aria-hidden="true">
            <rect x="1" y="1" width="14" height="12" fill="#fffff4" stroke="#9ac4ee" />
            <path d="M1 2H15" stroke="#1d73d8" strokeWidth="2" />
            <path d="M13 2H15" stroke="#e45c28" strokeWidth="2" />
          </Glyph>
          <Title>5554:HTC_Desire</Title>
          <Caption aria-label="Minimize">
            <Glyph width="10" height="8" viewBox="0 0 10 8"><path d="M1 7H7" stroke="#000" strokeWidth="2" /></Glyph>
          </Caption>
          <Caption aria-label="Maximize" disabled>
            <Glyph width="10" height="9" viewBox="0 0 10 9"><path d="M1 1H8.500V8.500H1.500V1M1 2H9" stroke="#808080" fill="none" /></Glyph>
          </Caption>
          <Caption aria-label="Close" $spaced>
            <Glyph width="10" height="8" viewBox="0 0 10 8"><path d="M1 0L8 7M8 0L1 7" stroke="#000" strokeWidth="1.500" /></Glyph>
          </Caption>
        </TitleBar>
        <Body>
          <ScreenPane>
            <Phone>
              <Screen>
                <StatusBar>
                  <NetworkIcon />
                  <SignalIcon />
                  <BatteryIcon />
                  <Clock>11:19</Clock>
                </StatusBar>
                <DayHeader>
                  <Today>Today</Today>
                  <DateText>Monday 04 June 2012</DateText>
                  <ViewName>Year View</ViewName>
                </DayHeader>
                <Calendar>
                  <thead>
                    <tr>
                      {["Mon", "Tue", "Wed", "Thu", "Fri", "Sat", "Sun"].map((d) => (
                        <Weekday key={d} scope="col">{d}</Weekday>
                      ))}
                    </tr>
                  </thead>
                  <tbody>
                    {weeks.map((days, w) => (
                      <tr key={w}>
                        {w === 0 && <Blank $edge="top" colSpan={4} />}
                        {days.map((day) => (
                          <Day key={day} day={day} weekend={(day + 3) % 7 >= 5} />
                        ))}
                        {w === 4 && <Blank $edge="none" />}
                      </tr>
                    ))}
                    <tr>
                      <Blank $edge="bottom" colSpan={7} />
                    </tr>
                  </tbody>
                </Calendar>
                <BlankArea />
                <TabBar>
                  {tabs.map((t) => (
                    <Tab key={t.label} $active={t.active} aria-current={t.active ? "page" : undefined}>
                      <Glyph width="24" height="24" viewBox="0 0 24 24" aria-hidden="true">{t.art}</Glyph>
                      <TabLabel $fade={t.fade}>{t.label}</TabLabel>
                    </Tab>
                  ))}
                </TabBar>
              </Screen>
            </Phone>
          </ScreenPane>
          <Divider />
          <ControlPane>
            <ButtonPad>
              <Round name="Camera" />
              <Round name="Volume down" />
              <Round name="Volume up" />
              <Round name="Power" />
              <Round name="Call" />
              <DirectionPad />
              <Round name="End call" />
              <Round name="Home" />
              <RoundButton>MENU</RoundButton>
              <Round name="Back" />
              <Round name="Search" />
            </ButtonPad>
            <Keyboard>
              {keyRows.flat().map(([main, alt]) => <CharKey key={main} main={main} alt={alt} />)}
              <Key>
                <KeyStack>
                  DEL
                  <Glyph width="26" height="13" viewBox="0 0 26 13" aria-hidden="true">
                    <path d="M2 6.500L8 1.500H24V11.500H8Z" fill="none" stroke="#222" strokeWidth="1.500" />
                    <path d="M12 4L18 9M18 4L12 9" stroke="#222" strokeWidth="2" />
                  </Glyph>
                </KeyStack>
              </Key>
              <Key aria-label="Shift">
                <KeyDrawing>
                  <Glyph width="22" height="22" viewBox="0 0 22 22" fill="none" stroke="#222" strokeWidth="1.500">
                    <path d="M11 1L20 11H15V15H7V11H2ZM7 17.500H15V21H7Z" />
                  </Glyph>
                </KeyDrawing>
              </Key>
              {["Z", "X", "C", "V", "B", "N", "M", "."].map((c) => <CharKey key={c} main={c} />)}
              <Key aria-label="Enter">
                <KeyDrawing>
                  <Glyph width="26" height="20" viewBox="0 0 26 20">
                    <path d="M1 12L10 4V9H20V1H25V11L22 15H10V19Z" fill="#2a2a2a" />
                  </Glyph>
                </KeyDrawing>
              </Key>
              <Key><KeyWord $light>ALT</KeyWord></Key>
              <Key><KeyWord>SYM</KeyWord></Key>
              <CharKey main="@" />
              <Key $wide aria-label="Space">
                <KeyDrawing $at="bottom">
                  <Glyph width="22" height="6" viewBox="0 0 22 6"><path d="M1 0V5H21V0" fill="none" stroke="#222" strokeWidth="2" /></Glyph>
                </KeyDrawing>
                <KeyDrawing $at="corner">
                  <Glyph width="20" height="22" viewBox="0 0 20 22">
                    <path d="M1 11H14M18 4V18" stroke="#f4f4f4" strokeWidth="2" />
                    <path d="M11 6L17 11L11 16Z" fill="#f4f4f4" />
                  </Glyph>
                </KeyDrawing>
              </Key>
              <CharKey main="/" alt="?" />
              <CharKey main="," />
              <Key><KeyWord $light>ALT</KeyWord></Key>
            </Keyboard>
          </ControlPane>
        </Body>
      </EmulatorWindow>
      <Shades />
    </>
  );
}
